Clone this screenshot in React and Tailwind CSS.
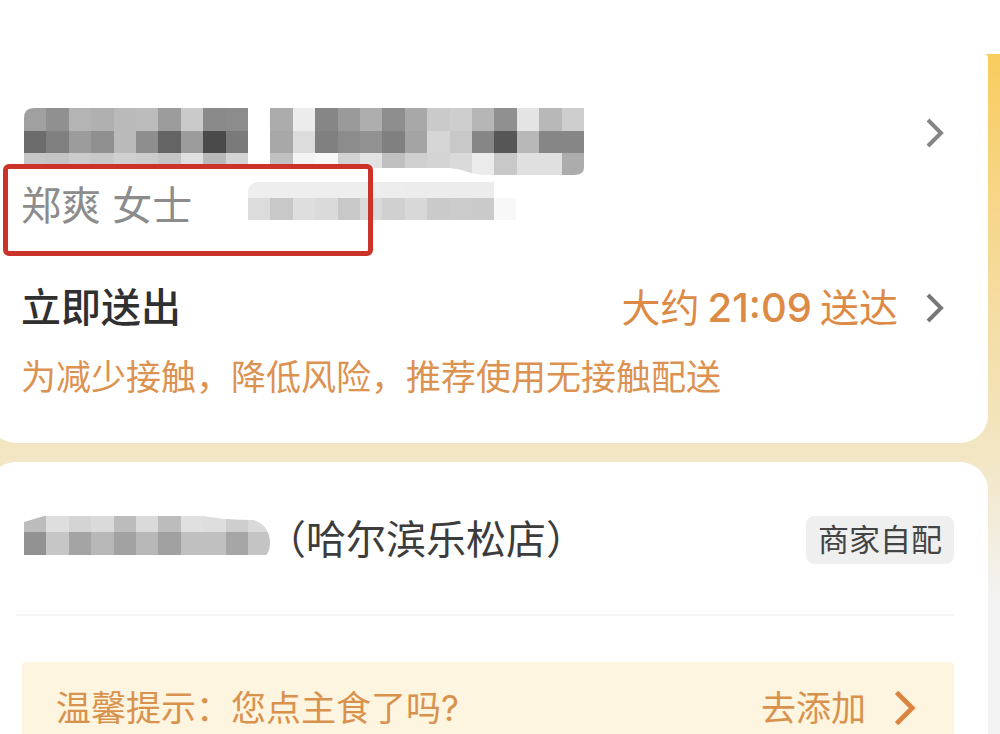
import React from 'react';

const TILE = 22.4;

const addressRows = [
  {
    y: 0,
    h: 23,
    tones: 'a0 90 b4 b0 ba bc 9c ca 8a 8c ff ac ec 86 9a ae 8e a8 ca ce b6 90 e4 b8 ce',
  },
  {
    y: 23,
    h: 22,
    tones: '6c 80 9c 90 ba 8e 64 9c 4a 7a ff a8 dc 80 8c 92 80 a4 d6 c8 86 56 b8 86 86',
  },
  {
    y: 45,
    h: 23,
    tones: 'c6 c4 cc c8 d0 cc c4 e0 b8 d4 ff c0 f4 f8 d2 e2 c0 d0 d4 da eb c8 e0 e0 ac',
  },
];

const phoneRows = [
  { y: 0, h: 16, tones: 'ee ee ee ee ee ee ed ec ec ec ec fd' },
  { y: 16, h: 22, tones: 'dc c8 de da c8 da d0 d8 ca cc ca f8' },
];

const shopRows = [
  { y: 0, h: 16, tones: 'bc de d4 da bc da bc e0 de ce da' },
  { y: 16, h: 23, tones: '92 c6 a4 b8 a2 b8 a0 c0 c0 a6 c4' },
];

const Mosaic = ({ id, rows, width, height, clip, label }) => (
  <svg
    width={width}
    height={height}
    viewBox={`0 0 ${width} ${height}`}
    className="block shrink-0"
    role="img"
    aria-label={label}
  >
    <clipPath id={id}>
      <path d={clip} />
    </clipPath>
    <g clipPath={`url(#${id})`} shapeRendering="crispEdges">
      {rows.map((row) =>
        row.tones.split(' ').map((tone, i) => (
          <rect
            key={`${row.y}-${i}`}
            x={i * TILE}
            y={row.y}
            width={TILE}
            height={row.h}
            fill={`#${tone}${tone}${tone}`}
          />
        ))
      )}
    </g>
  </svg>
);

const Chevron = ({ className }) => (
  <svg
    viewBox="0 0 18 30"
    fill="none"
    stroke="currentColor"
    strokeWidth="4"
    className={`block shrink-0 ${className}`}
    aria-hidden="true"
  >
    <path d="M2 2 L15 15 L2 28" />
  </svg>
);

const DeliveryCard = () => (
  <section className="-ml-3 mr-3 rounded-b-[28px] rounded-tr-sm bg-white pt-[54px] pb-[42px] pl-[33px] pr-[34px]">
    <a href="#address" className="flex items-start justify-between pr-2.5">
      <span className="pl-[3px]">
        <Mosaic
          id="address-clip"
          rows={addressRows}
          width={560}
          height={68}
          clip="M0 10 Q0 0 10 0 H560 V60 Q560 67 550 67 H462 C445 67 440 60 420 60 H0 Z"
          label="地址"
        />
      </span>
      <Chevron className="mt-2.5 h-[30px] w-[18px] text-[#858585]" />
    </a>

    <div className="relative flex h-[60px] items-center">
      <p className="w-[227px] text-[40px] leading-[60px] text-[#8c8c8c]">郑爽 女士</p>
      <Mosaic
        id="phone-clip"
        rows={phoneRows}
        width={268}
        height={48}
        clip="M0 8 Q2 0 12 0 H246 V16 H268 V38 H0 Z"
        label="电话"
      />
      <div className="absolute -top-3 -left-[18px] h-[92px] w-[370px] rounded-md border-[5px] border-[#cb322a]" />
    </div>

    <div className="mt-[42px] flex h-[60px] items-center justify-between pr-2.5">
      <h2 className="text-[40px] font-medium text-[#303030]">立即送出</h2>
      <a href="#time" className="flex items-center gap-7 text-[39px] text-[#dc8a45]">
        <span className="flex items-center gap-2">
          <span>大约</span>
          <span className="text-[40px] font-medium">21:09</span>
          <span>送达</span>
        </span>
        <Chevron className="h-[30px] w-[18px] text-[#777777]" />
      </a>
    </div>
    <p className="mt-[15px] text-[35px] leading-[48px] whitespace-nowrap text-[#dc9250]">
      为减少接触，降低风险，推荐使用无接触配送
    </p>
  </section>
);

const ShopCard = () => (
  <section className="-ml-3 mr-3 mt-[19px] rounded-t-[28px] bg-white pt-[54px] pl-[34px] pr-[34px] pb-8">
    <div className="flex h-12 items-center justify-between">
      <h2 className="flex items-start pl-0.5 text-[40px] leading-[48px] whitespace-nowrap text-[#3c3c3c]">
        <Mosaic
          id="shop-clip"
          rows={shopRows}
          width={246}
          height={39}
          clip="M0 6 L20 0 H180 Q200 4 230 4 Q246 10 246 27 Q246 35 242 39 H0 Z"
          label="店名"
        />
        <span className="-ml-1">（哈尔滨乐松店）</span>
      </h2>
      <span className="rounded-lg bg-[#efefef] px-3 text-[31px] leading-[48px] text-[#444444]">
        商家自配
      </span>
    </div>
    <hr className="-ml-1.5 mt-[50px] border-t-2 border-[#f5f5f5]" />
    <div className="mt-[46px] flex h-[92px] items-center justify-between rounded-sm bg-[#fdf5df] pl-[34px] pr-[38px] text-[35px] whitespace-nowrap text-[#d9924e]">
      <p>温馨提示：您点主食了吗?</p>
      <a href="#add" className="flex items-center gap-7">
        去添加
        <Chevron className="h-[36px] w-[22px] text-[#dc8440]" />
      </a>
    </div>
  </section>
);

const App = () => {
  return (
    <div
      lang="zh-CN"
      className="h-screen overflow-hidden bg-white font-['Inter','Noto_Sans_CJK_SC',sans-serif]"
    >
      <div className="h-[54px]" />
      <main className="bg-linear-to-b from-[#f8cc5d] from-0% via-[#f2e6c4] via-55% to-[#f3f3f3] to-75%">
        <DeliveryCard />
        <ShopCard />
      </main>
    </div>
  );
};

export default App;
